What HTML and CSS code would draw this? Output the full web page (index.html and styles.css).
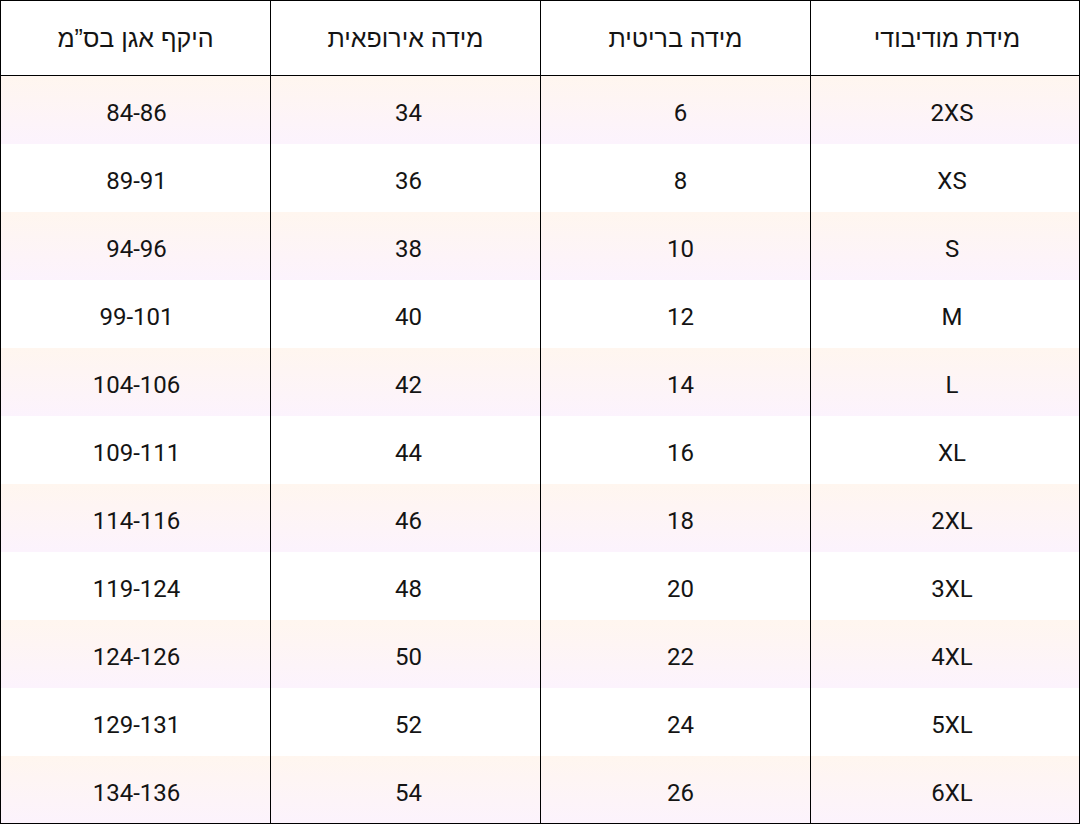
FILE: index.html
```html
<!DOCTYPE html>
<html lang="he" dir="rtl">
<head>
<meta charset="utf-8">
<link rel="stylesheet" href="styles.css">
</head>
<body>
<div class="size-table">
  <div class="cell head">מידת מודיבודי</div>
  <div class="cell head">מידה בריטית</div>
  <div class="cell head">מידה אירופאית</div>
  <div class="cell head">היקף אגן בס”מ</div>

  <div class="cell shade">2XS</div><div class="cell shade">6</div><div class="cell shade">34</div><div class="cell shade">84-86</div>
  <div class="cell">XS</div><div class="cell">8</div><div class="cell">36</div><div class="cell">89-91</div>
  <div class="cell shade">S</div><div class="cell shade">10</div><div class="cell shade">38</div><div class="cell shade">94-96</div>
  <div class="cell">M</div><div class="cell">12</div><div class="cell">40</div><div class="cell">99-101</div>
  <div class="cell shade">L</div><div class="cell shade">14</div><div class="cell shade">42</div><div class="cell shade">104-106</div>
  <div class="cell">XL</div><div class="cell">16</div><div class="cell">44</div><div class="cell">109-111</div>
  <div class="cell shade">2XL</div><div class="cell shade">18</div><div class="cell shade">46</div><div class="cell shade">114-116</div>
  <div class="cell">3XL</div><div class="cell">20</div><div class="cell">48</div><div class="cell">119-124</div>
  <div class="cell shade">4XL</div><div class="cell shade">22</div><div class="cell shade">50</div><div class="cell shade">124-126</div>
  <div class="cell">5XL</div><div class="cell">24</div><div class="cell">52</div><div class="cell">129-131</div>
  <div class="cell shade">6XL</div><div class="cell shade">26</div><div class="cell shade">54</div><div class="cell shade">134-136</div>
</div>
</body>
</html>
```

FILE: styles.css
```css
html, body {
  margin: 0;
  padding: 0;
  background: #ffffff;
}
body {
  font-family: Roboto, "Liberation Sans", sans-serif;
  color: #141414;
  font-size: 24px;
}
.size-table {
  box-sizing: border-box;
  width: 1080px;
  height: 824px;
  overflow: hidden;
  border: 1px solid #000;
  direction: rtl;
  display: grid;
  grid-template-columns: 269px 270px 270px 269px;
  grid-template-rows: 75px;
  grid-auto-rows: 68px;
}
.cell {
  box-sizing: border-box;
  display: flex;
  align-items: center;
  justify-content: center;
  padding-top: 5px;
  border-left: 1px solid #000;
}
.cell:nth-child(4n+1) { padding-left: 14px; }
.cell:nth-child(4n+2) { padding-left: 10px; }
.cell:nth-child(4n+3) { padding-left: 6px; }
.cell:nth-child(4n) {
  padding-left: 2px;
  border-left: none;
}
.head {
  font-family: "Liberation Sans", sans-serif;
  font-size: 25px;
  border-bottom: 1px solid #000;
  padding-top: 0;
}
.cell.head { padding-left: 0; }
.cell.head:first-child { padding-left: 4px; }
.shade {
  background: linear-gradient(#fff6ef, #fcf3fd);
}
```
